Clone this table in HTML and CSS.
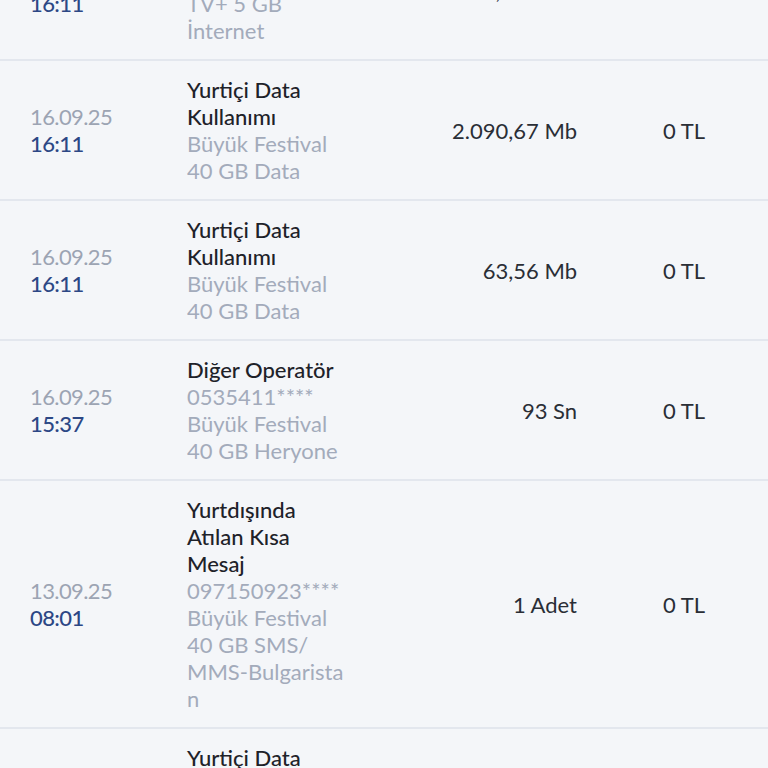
FILE: index.html
```html
<!DOCTYPE html>
<html lang="tr">
<head>
<meta charset="utf-8">
<link rel="stylesheet" href="styles.css">
</head>
<body>
<div class="list">
  <div class="row">
    <div class="when"><span class="date">16.09.25</span><span class="time">16:11</span></div>
    <div class="desc"><span class="title">Yurtiçi Data<br>Kullanımı</span><span class="sub">TV+ 5 GB<br>İnternet</span></div>
    <div class="amount">35,012 Mb</div>
    <div class="price">0 TL</div>
  </div>
  <div class="row">
    <div class="when"><span class="date">16.09.25</span><span class="time">16:11</span></div>
    <div class="desc"><span class="title">Yurtiçi Data<br>Kullanımı</span><span class="sub">Büyük Festival<br>40 GB Data</span></div>
    <div class="amount">2.090,67 Mb</div>
    <div class="price">0 TL</div>
  </div>
  <div class="row">
    <div class="when"><span class="date">16.09.25</span><span class="time">16:11</span></div>
    <div class="desc"><span class="title">Yurtiçi Data<br>Kullanımı</span><span class="sub">Büyük Festival<br>40 GB Data</span></div>
    <div class="amount">63,56 Mb</div>
    <div class="price">0 TL</div>
  </div>
  <div class="row">
    <div class="when"><span class="date">16.09.25</span><span class="time">15:37</span></div>
    <div class="desc"><span class="title">Diğer Operatör</span><span class="sub">0535411****<br>Büyük Festival<br>40 GB Heryone</span></div>
    <div class="amount">93 Sn</div>
    <div class="price">0 TL</div>
  </div>
  <div class="row">
    <div class="when"><span class="date">13.09.25</span><span class="time">08:01</span></div>
    <div class="desc"><span class="title">Yurtdışında<br>Atılan Kısa<br>Mesaj</span><span class="sub">097150923****<br>Büyük Festival<br>40 GB SMS/<br>MMS-Bulgarista<br>n</span></div>
    <div class="amount">1 Adet</div>
    <div class="price">0 TL</div>
  </div>
  <div class="row">
    <div class="when"><span class="date">13.09.25</span><span class="time">07:58</span></div>
    <div class="desc"><span class="title">Yurtiçi Data<br>Kullanımı</span><span class="sub">Büyük Festival<br>40 GB Data</span></div>
    <div class="amount">12,40 Mb</div>
    <div class="price">0 TL</div>
  </div>
</div>
</body>
</html>
```

FILE: styles.css
```css
html, body {
  margin: 0;
  padding: 0;
  background: #f4f6f9;
  height: 768px;
  overflow: hidden;
}
body {
  font-family: "Lato", "Inter", sans-serif;
  font-size: 22px;
  line-height: 27px;
}
.list {
  margin-top: -79px;
}
.row {
  display: grid;
  grid-template-columns: 157px 160px 1fr 128px;
  align-items: center;
  padding: 15px 63px 15px 30px;
  border-bottom: 2px solid #e3e7ee;
  min-height: 108px;
}
.when {
  display: flex;
  flex-direction: column;
  letter-spacing: -0.6px;
}
.date {
  color: #9ca4b3;
}
.time {
  color: #2c4785;
  font-weight: 500;
}
.desc {
  display: flex;
  flex-direction: column;
  white-space: nowrap;
}
.title {
  color: #1e2229;
  font-weight: 500;
}
.sub {
  color: #a3abbb;
}
.amount {
  text-align: right;
  color: #2a2e36;
}
.price {
  text-align: right;
  color: #2a2e36;
}
```
